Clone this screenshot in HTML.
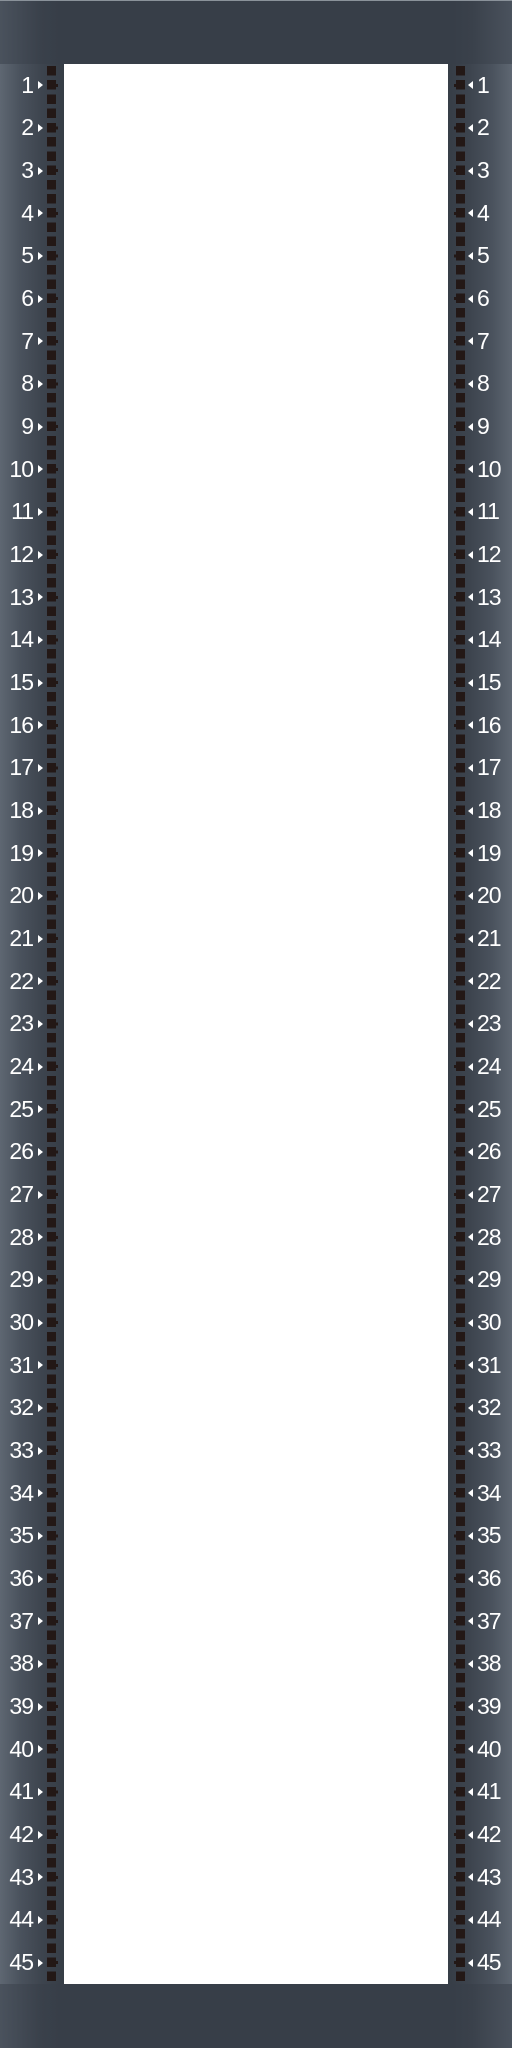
<!DOCTYPE html>
<html><head><style>
html,body{margin:0;padding:0}
body{width:512px;height:2048px;position:relative;overflow:hidden;
background:linear-gradient(90deg,#5e6772 0px,#4a525d 20px,#3d444e 42px,#363d46 64px,#363d46 448px,#3d444e 470px,#4a525d 492px,#5e6772 512px);font-family:"Liberation Sans",sans-serif}
.top{position:absolute;left:0;top:0;width:512px;height:64px;background:linear-gradient(90deg,#4a525d 0,#3a414b 40px,#373e48 60px,#373e48 452px,#3a414b 472px,#4a525d 512px);border-top:1px solid #8a929a;box-sizing:border-box}
.bot{position:absolute;left:0;top:1984px;width:512px;height:64px;background:linear-gradient(90deg,#4a525d 0,#3a414b 40px,#373e48 60px,#373e48 452px,#3a414b 472px,#4a525d 512px)}
.white{position:absolute;left:64px;top:64px;width:384px;height:1920px;background:#fff}
.holes{position:absolute;top:64px;width:9px;height:1920px;
background:repeating-linear-gradient(180deg,transparent 0,transparent 2px,#231816 2px,#231816 11.5px,transparent 11.5px,transparent 14.222px)}
.dots{position:absolute;top:64px;width:3px;height:1920px;
background:repeating-linear-gradient(180deg,transparent 0,transparent 19.8px,#231816 19.8px,#231816 22.8px,transparent 22.8px,transparent 42.667px)}
.l,.r{position:absolute;height:42.667px;display:flex;align-items:center;color:#fff;font-size:23px;letter-spacing:-1px}
.l{left:0;width:44px;justify-content:flex-end}
.r{left:466px;width:46px;justify-content:flex-start}
.tl{width:0;height:0;border-top:4px solid transparent;border-bottom:4px solid transparent;border-left:5px solid #fff;margin-left:5px;margin-right:1px}
.tr{width:0;height:0;border-top:4px solid transparent;border-bottom:4px solid transparent;border-right:5px solid #fff;margin-left:2px;margin-right:4px}
</style></head><body>
<div class="top"></div><div class="bot"></div>
<div class="white"></div>
<div class="holes" style="left:47px"></div><div class="dots" style="left:55px"></div>
<div class="holes" style="left:456px"></div><div class="dots" style="left:454px"></div>
<div class="l" style="top:64.0px">1<span class="tl"></span></div><div class="r" style="top:64.0px"><span class="tr"></span>1</div>
<div class="l" style="top:106.67px">2<span class="tl"></span></div><div class="r" style="top:106.67px"><span class="tr"></span>2</div>
<div class="l" style="top:149.33px">3<span class="tl"></span></div><div class="r" style="top:149.33px"><span class="tr"></span>3</div>
<div class="l" style="top:192.0px">4<span class="tl"></span></div><div class="r" style="top:192.0px"><span class="tr"></span>4</div>
<div class="l" style="top:234.67px">5<span class="tl"></span></div><div class="r" style="top:234.67px"><span class="tr"></span>5</div>
<div class="l" style="top:277.33px">6<span class="tl"></span></div><div class="r" style="top:277.33px"><span class="tr"></span>6</div>
<div class="l" style="top:320.0px">7<span class="tl"></span></div><div class="r" style="top:320.0px"><span class="tr"></span>7</div>
<div class="l" style="top:362.67px">8<span class="tl"></span></div><div class="r" style="top:362.67px"><span class="tr"></span>8</div>
<div class="l" style="top:405.33px">9<span class="tl"></span></div><div class="r" style="top:405.33px"><span class="tr"></span>9</div>
<div class="l" style="top:448.0px">10<span class="tl"></span></div><div class="r" style="top:448.0px"><span class="tr"></span>10</div>
<div class="l" style="top:490.67px">11<span class="tl"></span></div><div class="r" style="top:490.67px"><span class="tr"></span>11</div>
<div class="l" style="top:533.33px">12<span class="tl"></span></div><div class="r" style="top:533.33px"><span class="tr"></span>12</div>
<div class="l" style="top:576.0px">13<span class="tl"></span></div><div class="r" style="top:576.0px"><span class="tr"></span>13</div>
<div class="l" style="top:618.67px">14<span class="tl"></span></div><div class="r" style="top:618.67px"><span class="tr"></span>14</div>
<div class="l" style="top:661.33px">15<span class="tl"></span></div><div class="r" style="top:661.33px"><span class="tr"></span>15</div>
<div class="l" style="top:704.0px">16<span class="tl"></span></div><div class="r" style="top:704.0px"><span class="tr"></span>16</div>
<div class="l" style="top:746.67px">17<span class="tl"></span></div><div class="r" style="top:746.67px"><span class="tr"></span>17</div>
<div class="l" style="top:789.33px">18<span class="tl"></span></div><div class="r" style="top:789.33px"><span class="tr"></span>18</div>
<div class="l" style="top:832.0px">19<span class="tl"></span></div><div class="r" style="top:832.0px"><span class="tr"></span>19</div>
<div class="l" style="top:874.67px">20<span class="tl"></span></div><div class="r" style="top:874.67px"><span class="tr"></span>20</div>
<div class="l" style="top:917.33px">21<span class="tl"></span></div><div class="r" style="top:917.33px"><span class="tr"></span>21</div>
<div class="l" style="top:960.0px">22<span class="tl"></span></div><div class="r" style="top:960.0px"><span class="tr"></span>22</div>
<div class="l" style="top:1002.67px">23<span class="tl"></span></div><div class="r" style="top:1002.67px"><span class="tr"></span>23</div>
<div class="l" style="top:1045.33px">24<span class="tl"></span></div><div class="r" style="top:1045.33px"><span class="tr"></span>24</div>
<div class="l" style="top:1088.0px">25<span class="tl"></span></div><div class="r" style="top:1088.0px"><span class="tr"></span>25</div>
<div class="l" style="top:1130.67px">26<span class="tl"></span></div><div class="r" style="top:1130.67px"><span class="tr"></span>26</div>
<div class="l" style="top:1173.33px">27<span class="tl"></span></div><div class="r" style="top:1173.33px"><span class="tr"></span>27</div>
<div class="l" style="top:1216.0px">28<span class="tl"></span></div><div class="r" style="top:1216.0px"><span class="tr"></span>28</div>
<div class="l" style="top:1258.67px">29<span class="tl"></span></div><div class="r" style="top:1258.67px"><span class="tr"></span>29</div>
<div class="l" style="top:1301.33px">30<span class="tl"></span></div><div class="r" style="top:1301.33px"><span class="tr"></span>30</div>
<div class="l" style="top:1344.0px">31<span class="tl"></span></div><div class="r" style="top:1344.0px"><span class="tr"></span>31</div>
<div class="l" style="top:1386.67px">32<span class="tl"></span></div><div class="r" style="top:1386.67px"><span class="tr"></span>32</div>
<div class="l" style="top:1429.33px">33<span class="tl"></span></div><div class="r" style="top:1429.33px"><span class="tr"></span>33</div>
<div class="l" style="top:1472.0px">34<span class="tl"></span></div><div class="r" style="top:1472.0px"><span class="tr"></span>34</div>
<div class="l" style="top:1514.67px">35<span class="tl"></span></div><div class="r" style="top:1514.67px"><span class="tr"></span>35</div>
<div class="l" style="top:1557.33px">36<span class="tl"></span></div><div class="r" style="top:1557.33px"><span class="tr"></span>36</div>
<div class="l" style="top:1600.0px">37<span class="tl"></span></div><div class="r" style="top:1600.0px"><span class="tr"></span>37</div>
<div class="l" style="top:1642.67px">38<span class="tl"></span></div><div class="r" style="top:1642.67px"><span class="tr"></span>38</div>
<div class="l" style="top:1685.33px">39<span class="tl"></span></div><div class="r" style="top:1685.33px"><span class="tr"></span>39</div>
<div class="l" style="top:1728.0px">40<span class="tl"></span></div><div class="r" style="top:1728.0px"><span class="tr"></span>40</div>
<div class="l" style="top:1770.67px">41<span class="tl"></span></div><div class="r" style="top:1770.67px"><span class="tr"></span>41</div>
<div class="l" style="top:1813.33px">42<span class="tl"></span></div><div class="r" style="top:1813.33px"><span class="tr"></span>42</div>
<div class="l" style="top:1856.0px">43<span class="tl"></span></div><div class="r" style="top:1856.0px"><span class="tr"></span>43</div>
<div class="l" style="top:1898.67px">44<span class="tl"></span></div><div class="r" style="top:1898.67px"><span class="tr"></span>44</div>
<div class="l" style="top:1941.33px">45<span class="tl"></span></div><div class="r" style="top:1941.33px"><span class="tr"></span>45</div>
</body></html>
